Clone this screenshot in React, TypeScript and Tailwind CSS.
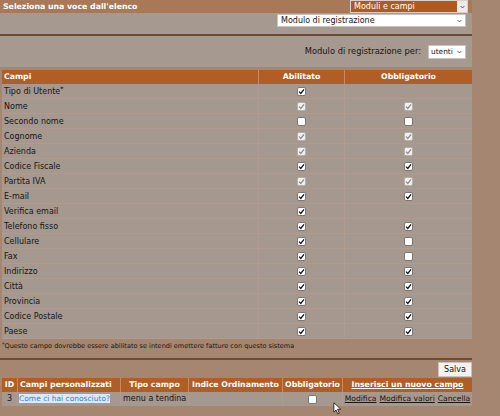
import React from 'react';

type Box = 'on' | 'dis' | 'off' | null;

const rows: [string, Box, Box][] = [
  ['Tipo di Utente', 'on', null],
  ['Nome', 'dis', 'dis'],
  ['Secondo nome', 'off', 'off'],
  ['Cognome', 'dis', 'dis'],
  ['Azienda', 'dis', 'dis'],
  ['Codice Fiscale', 'on', 'on'],
  ['Partita IVA', 'dis', 'dis'],
  ['E-mail', 'on', 'on'],
  ['Verifica email', 'on', null],
  ['Telefono fisso', 'on', 'on'],
  ['Cellulare', 'on', 'off'],
  ['Fax', 'on', 'off'],
  ['Indirizzo', 'on', 'on'],
  ['Città', 'on', 'on'],
  ['Provincia', 'on', 'on'],
  ['Codice Postale', 'on', 'on'],
  ['Paese', 'on', 'on'],
];

function Check({ state }: { state: Box }) {
  if (!state) return null;
  return (
    <span
      className={`inline-flex h-[9px] w-[9px] items-center justify-center rounded-[2px] border ${
        state === 'dis' ? 'border-[#b4b0ad] bg-[#f3f1ef]' : 'border-[#7d7874] bg-white'
      }`}
    >
      {state !== 'off' && (
        <svg viewBox="0 0 10 10" className="h-[7px] w-[7px]">
          <path
            d="M1.5 5.2 L4 7.8 L8.6 2"
            fill="none"
            stroke={state === 'dis' ? '#8f8b88' : '#111'}
            strokeWidth="1.9"
          />
        </svg>
      )}
    </span>
  );
}

function Arrow() {
  return (
    <svg viewBox="0 0 8 6" className="h-[4px] w-[5px] shrink-0">
      <path d="M1 1.5 L4 4.5 L7 1.5" fill="none" stroke="#333" strokeWidth="1.3" />
    </svg>
  );
}

export default function App() {
  return (
    <div
      className="relative h-[416px] w-[500px] overflow-hidden bg-[#a58670] text-[#1a1512]"
      style={{ fontFamily: '"DejaVu Sans", Verdana, sans-serif' }}
    >
      <div className="w-[472px]">
        {/* top bar */}
        <div className="flex h-[13px] items-center justify-between bg-[#a97856] pl-[3px]">
          <span className="text-[7.8px] font-bold text-white">Seleziona una voce dall'elenco</span>
          <div className="mr-[4px] flex h-[13px] w-[118px] items-stretch border border-[#d9cfc8] bg-[#b05a20]">
            <span className="flex-1 pl-[3px] text-[8px] leading-[11px] text-white">Moduli e campi</span>
            <span className="flex w-[10px] items-center justify-center bg-[#eeeae7]">
              <Arrow />
            </span>
          </div>
        </div>

        {/* select panel */}
        <div className="flex h-[21px] justify-end bg-[#a59990] pr-[6px] pt-[1px]">
          <div className="flex h-[13px] w-[189px] items-center justify-between border border-[#c9c1bb] bg-white px-[3px]">
            <span className="text-[8px]">Modulo di registrazione</span>
            <Arrow />
          </div>
        </div>
        <div className="h-[2px] bg-[#6c4d39]" />
        <div className="flex h-[31px] items-center justify-end gap-[7px] bg-[#a59990] pr-[6px]">
          <span className="text-[8.3px]">Modulo di registrazione per:</span>
          <div className="flex h-[14px] w-[38px] items-center justify-between border border-[#c9c1bb] bg-white pl-[2px] pr-[3px]">
            <span className="text-[7.4px]">utenti</span>
            <Arrow />
          </div>
        </div>

        {/* fields table */}
        <div className="mt-[3px] pl-[2px]">
          <div className="grid h-[14px] grid-cols-[256px_86px_128px] bg-[#b05d26] text-[7.8px] font-bold leading-[14px] text-white">
            <span className="pl-[2px]">Campi</span>
            <span className="border-l border-[#c98a60] text-center">Abilitato</span>
            <span className="border-l border-[#c98a60] text-center">Obbligatorio</span>
          </div>
          {rows.map(([label, a, o]) => (
            <div
              key={label}
              className="grid h-[15px] grid-cols-[256px_86px_128px] border-b border-[#b09c8e] bg-[#a4988f] text-[8px] leading-[15px]"
            >
              <span className="pl-[2px]">
                {label}
                {label === 'Tipo di Utente' && <sup className="text-[6px] font-bold">*</sup>}
              </span>
              <span className="flex items-center justify-center border-l border-[#b09c8e]">
                <Check state={a} />
              </span>
              <span className="flex items-center justify-center border-l border-[#b09c8e]">
                <Check state={o} />
              </span>
            </div>
          ))}
        </div>

        <p className="mt-[1px] pl-[2px] text-[6.55px] leading-[12px]">
          <sup className="text-[5px]">*</sup>Questo campo dovrebbe essere abilitato se intendi emettere fatture con questo sistema
        </p>

        <div className="mt-[6px] h-[2px] bg-[#6c4d39]" />

        <div className="flex justify-end pt-[2px]">
          <span className="flex h-[15px] w-[34px] items-center justify-center border border-[#c8c3bf] bg-[#f4f2f0] text-[8px]">
            Salva
          </span>
        </div>

        {/* custom fields */}
        <div className="mt-[1px] pl-[2px]">
          <div className="grid h-[14px] grid-cols-[15px_103px_68px_94px_60px_130px] bg-[#b05d26] text-[7.8px] font-bold leading-[14px] text-white">
            <span className="text-center">ID</span>
            <span className="border-l border-[#c98a60] pl-[2px]">Campi personalizzati</span>
            <span className="border-l border-[#c98a60] text-center">Tipo campo</span>
            <span className="border-l border-[#c98a60] text-center">Indice Ordinamento</span>
            <span className="border-l border-[#c98a60] text-center">Obbligatorio</span>
            <span className="border-l border-[#c98a60] text-center underline">Inserisci un nuovo campo</span>
          </div>
          <div className="grid h-[14px] grid-cols-[15px_103px_68px_94px_60px_130px] bg-[#a4988f] text-[8px] leading-[14px]">
            <span className="text-center">3</span>
            <span className="overflow-hidden whitespace-nowrap border-l border-[#b09c8e] pl-[1px]">
              <span className="bg-[#dbe9f8] text-[7.5px] text-[#3a80d2]">Come ci hai conosciuto?</span>
            </span>
            <span className="border-l border-[#b09c8e] pl-[2px]">menu a tendina</span>
            <span className="border-l border-[#b09c8e]" />
            <span className="flex items-center justify-center border-l border-[#b09c8e]">
              <Check state="off" />
            </span>
            <span className="flex justify-center gap-[3px] border-l border-[#b09c8e] text-[7.6px] underline">
              <span>Modifica</span>
              <span>Modifica valori</span>
              <span>Cancella</span>
            </span>
          </div>
        </div>
      </div>

      {/* mouse pointer */}
      <svg viewBox="0 0 12 18" className="absolute left-[333px] top-[402px] h-[13px] w-[9px]">
        <path d="M1 1 L1 14 L4 11 L6.5 16.5 L8.5 15.5 L6 10 L10.5 10 Z" fill="#fff" stroke="#000" strokeWidth="1" />
      </svg>
    </div>
  );
}
